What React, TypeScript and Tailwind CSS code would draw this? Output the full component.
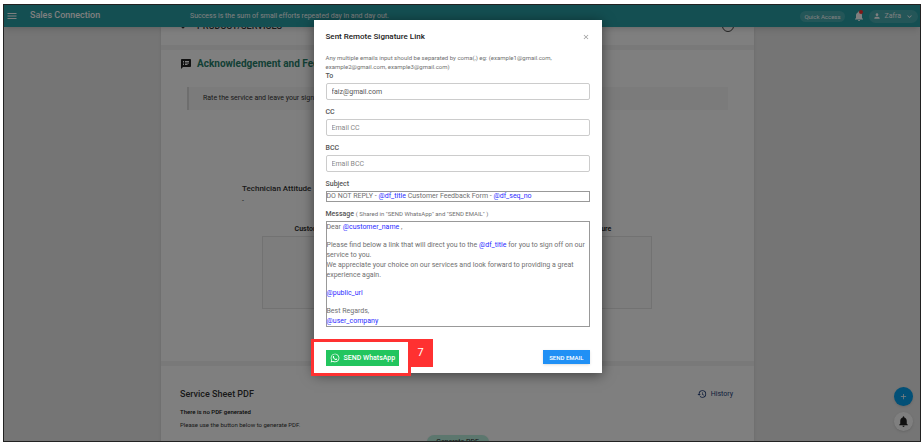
import { useId } from "react";
import type { ReactNode } from "react";
import {
  MdAdd,
  MdClose,
  MdExpandMore,
  MdHistory,
  MdMenu,
  MdNotifications,
  MdPerson,
  MdSpeakerNotes,
} from "react-icons/md";
import { FaWhatsapp } from "react-icons/fa";

function Header() {
  return (
    <header className="relative z-10 flex h-[22px] shrink-0 items-center bg-[#289ea4] pr-[2px] pl-[2px] text-white shadow-md">
      <button type="button" aria-label="Menu" className="mr-3">
        <MdMenu size={12} />
      </button>
      <h1 className="w-40 text-[9px] font-medium">Sales Connection</h1>
      <p className="text-[7px]">Success is the sum of small efforts repeated day in and day out.</p>
      <div className="ml-auto flex items-center">
        <button type="button" className="rounded-full bg-white/15 px-1 text-[6px] leading-[11px]">
          Quick Access
        </button>
        <button type="button" aria-label="Notifications" className="relative mr-1 ml-2">
          <MdNotifications size={12} />
          <span className="absolute top-0 right-[2px] size-1 rounded-full bg-[#ff3030]" />
        </button>
        <button type="button" className="flex items-center gap-1 rounded-full bg-white/15 px-1 text-[7px] leading-[13px]">
          <MdPerson size={8} />
          Zafra
          <MdExpandMore size={9} />
        </button>
      </div>
    </header>
  );
}

function SignatureBox({ label }: { label: string }) {
  return (
    <figure className="w-[128px]">
      <figcaption className="mb-[2px] text-center text-[7px] leading-[10px] font-bold text-[#333]">{label}</figcaption>
      <div className="h-[73px] border border-[#e4e4e4] bg-[#fafafa]" />
    </figure>
  );
}

function ServicePage() {
  return (
    <main className="mr-[166px] ml-[157px] flex flex-1 flex-col gap-[5px] bg-[#f3f3f3] text-[#333] shadow">
      <section className="-mt-5 flex h-[38px] shrink-0 items-center justify-between bg-white px-5">
        <h2 className="flex items-center gap-3 text-[9px] leading-3 font-medium">
          <span className="size-1 rotate-45 bg-[#333]" />
          PRODUCT/SERVICES
        </h2>
        <span className="size-3 rounded-full border border-[#444]" />
      </section>

      <section className="h-[311px] shrink-0 bg-white px-[19px] pt-2">
        <h2 className="flex items-center gap-[5px] text-[10px] leading-3 font-bold text-[#26806a]">
          <MdSpeakerNotes size={12} className="text-[#222]" />
          Acknowledgement and Feedback
        </h2>
        <blockquote className="mx-[7px] mt-[17px] border-l-2 border-[#ddd] bg-[#f7f7f7] pl-[14px] text-[7px] leading-[23px]">
          Rate the service and leave your signature
        </blockquote>
        <dl className="mt-[73px] ml-[62px] text-[7px] leading-3">
          <dt className="text-[8px] font-medium">Technician Attitude</dt>
          <dd>-</dd>
        </dl>
        <div className="mt-[17px] mr-[83px] ml-[82px] flex justify-between">
          <SignatureBox label="Customer Signature" />
          <SignatureBox label="Your Signature" />
        </div>
      </section>

      <section className="flex-1 bg-white px-[19px] pt-[22px]">
        <div className="flex items-center justify-between">
          <h2 className="text-[9px] leading-3 font-medium">Service Sheet PDF</h2>
          <a href="#history" className="mr-[2px] flex items-center gap-1 text-[7px] text-[#223f7a]">
            <MdHistory size={10} />
            History
          </a>
        </div>
        <p className="mt-[6px] text-[6px] leading-3 font-medium text-[#111]">There is no PDF generated</p>
        <p className="mt-[1px] text-[6px] leading-3">Please use the button below to generate PDF.</p>
      </section>
    </main>
  );
}

function EmailField({ label, value, placeholder }: { label: string; value?: string; placeholder?: string }) {
  const id = useId();
  return (
    <div className="mb-[7px]">
      <label htmlFor={id} className="mb-[2px] block text-[7px] leading-[10px] font-medium text-[#555]">
        {label}
      </label>
      <input
        id={id}
        type="email"
        defaultValue={value}
        placeholder={placeholder}
        className="block h-[17px] w-full rounded-[2px] border border-[#ccc] px-[5px] text-[7px] text-[#555] placeholder:text-[#888]"
      />
    </div>
  );
}

function Token({ children }: { children: ReactNode }) {
  return <span className="text-[#2c2cff]">{children}</span>;
}

function SignatureDialog() {
  return (
    <div
      role="dialog"
      aria-label="Sent Remote Signature Link"
      className="w-[288px] bg-white px-3 pt-[11px] pb-[7px] text-[#707070] shadow-[0_2px_12px_rgba(0,0,0,0.5)]"
    >
      <div className="mb-[10px] flex items-center justify-between">
        <h2 className="text-[8px] leading-3 font-medium text-[#222]">Sent Remote Signature Link</h2>
        <button type="button" aria-label="Close" className="text-[#999]">
          <MdClose size={8} />
        </button>
      </div>
      <p className="text-[6px] leading-[9px]">
        Any multiple emails input should be separated by coma(,) eg: (example1@gmail.com,
        <br />
        example2@gmail.com, example3@gmail.com)
      </p>
      <EmailField label="To" value="faiz@gmail.com" />
      <EmailField label="CC" placeholder="Email CC" />
      <EmailField label="BCC" placeholder="Email BCC" />

      <h3 className="mb-[2px] text-[7px] leading-[10px] font-medium text-[#555]">Subject</h3>
      <div className="border border-[#999] text-[7px] leading-[9px]">
        DO NOT REPLY - <Token>@df_title</Token> Customer Feedback Form - <Token>@df_seq_no</Token>
      </div>

      <h3 className="mt-[7px] mb-[2px] text-[7px] leading-[10px] font-medium text-[#555]">
        Message <span className="text-[6px] font-normal text-[#707070]">( Shared in "SEND WhatsApp" and "SEND EMAIL" )</span>
      </h3>
      <div className="flex flex-col gap-2 border border-[#999] text-[7px] leading-[10px]">
        <p>
          Dear <Token>@customer_name</Token> ,
        </p>
        <p>
          Please find below a link that will direct you to the <Token>@df_title</Token> for you to sign off on our
          <br />
          service to you.
          <br />
          We appreciate your choice on our services and look forward to providing a great
          <br />
          experience again.
        </p>
        <p>
          <Token>@public_url</Token>
        </p>
        <p>
          Best Regards,
          <br />
          <Token>@user_company</Token>
        </p>
      </div>

      <div className="mt-[23px] flex items-start justify-between text-white">
        <div className="relative">
          <button type="button" className="flex h-4 items-center gap-1 bg-[#22c55e] px-1 text-[7px] font-medium">
            <FaWhatsapp size={10} />
            SEND WhatsApp
          </button>
          <div className="pointer-events-none absolute -top-[11px] -right-3 -bottom-[10px] -left-[15px] border-3 border-[#ff3131]">
            <span className="absolute -top-[3px] left-full flex h-7 w-[25px] items-center justify-center bg-[#ff3131] text-[11px]">
              7
            </span>
          </div>
        </div>
        <button type="button" className="h-[14px] bg-[#2090f5] px-[6px] text-[6px] font-medium shadow">
          SEND EMAIL
        </button>
      </div>
    </div>
  );
}

export default function App() {
  return (
    <div className="h-screen bg-white px-[3px] pt-1 pb-[2px] font-[Roboto,'Liberation_Sans',sans-serif]">
      <div className="relative flex h-full flex-col overflow-hidden border border-[#222] bg-[#eaeaea]">
        <Header />
        <ServicePage />

        <div className="absolute right-[7px] bottom-[10px] flex flex-col items-center gap-[6px]">
          <button
            type="button"
            aria-label="Add"
            className="flex size-[19px] items-center justify-center rounded-full bg-[#04a0ee] text-white shadow"
          >
            <MdAdd size={9} />
          </button>
          <button
            type="button"
            aria-label="Reminders"
            className="flex size-[19px] items-center justify-center rounded-full bg-white text-[#222] shadow"
          >
            <MdNotifications size={13} />
          </button>
        </div>
        <div className="absolute inset-x-0 -bottom-2 flex justify-center pr-[9px]">
          <button type="button" className="h-[14px] w-[62px] rounded-full bg-[#b8eedd] text-[7px] text-[#222] shadow">
            Generate PDF
          </button>
        </div>

        <div className="absolute inset-0 z-20 flex items-start justify-center bg-black/50 pt-[15px] pr-[9px]">
          <SignatureDialog />
        </div>
      </div>
    </div>
  );
}
